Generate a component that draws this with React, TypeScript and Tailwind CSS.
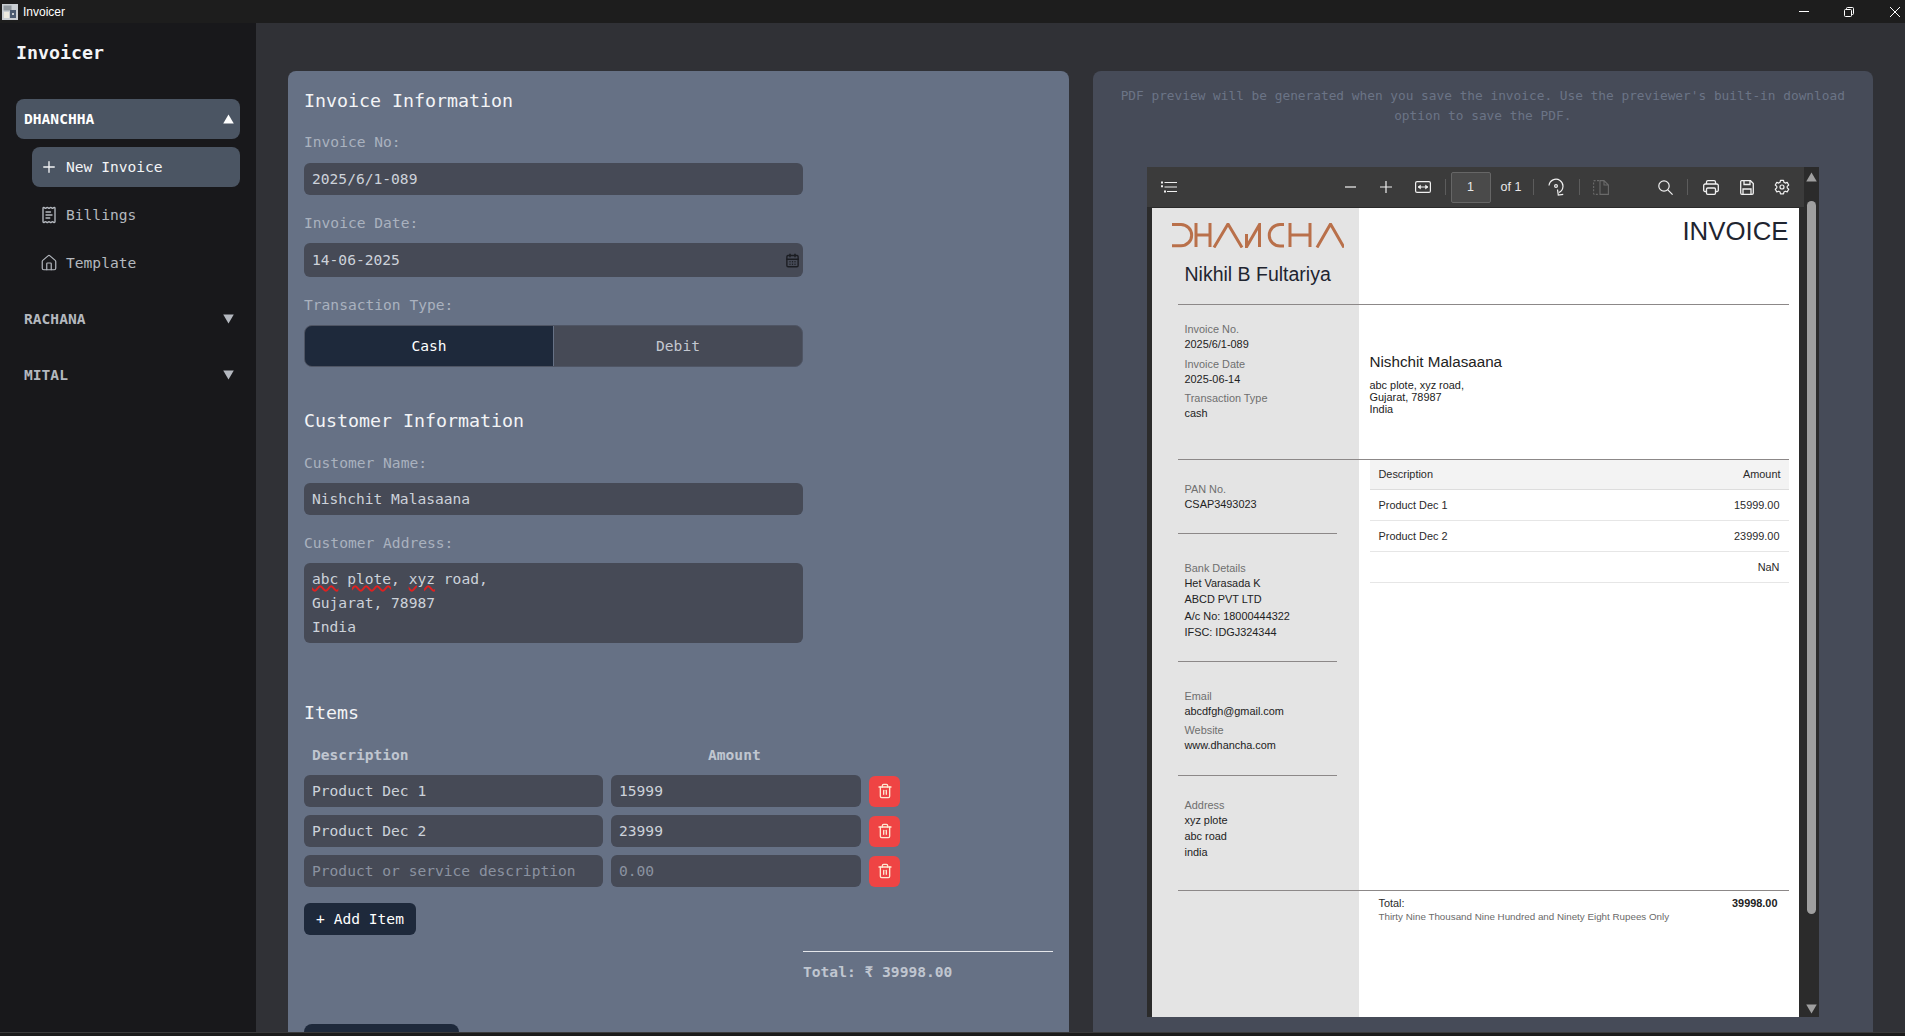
import { Plus, ReceiptText, House, Trash2, CalendarDays } from "lucide-react";
import type { ReactNode } from "react";

const squiggle = "underline decoration-[#e02020] decoration-wavy decoration-2 underline-offset-[1px]";

function Triangle({ up, className }: { up?: boolean; className: string }) {
    return (
        <svg width="11" height="10" viewBox="0 0 10 9" className={className} fill="currentColor">
            <path d={up ? "M5 0.5 L9.8 8.5 H0.2 Z" : "M0.2 0.5 H9.8 L5 8.5 Z"} />
        </svg>
    );
}

function Label({ children, className = "" }: { children: ReactNode; className?: string }) {
    return <div className={`h-5 leading-5 text-[14.6px] text-[#aab2bf] ${className}`}>{children}</div>;
}

function Heading({ children, className = "" }: { children: ReactNode; className?: string }) {
    return <h2 className={`h-7 pt-px leading-7 text-[18.3px] font-medium text-[#f3f4f6] ${className}`}>{children}</h2>;
}

function Field({ value, className = "", placeholder }: { value?: string; className?: string; placeholder?: string }) {
    return (
        <input
            readOnly
            value={value ?? ""}
            placeholder={placeholder}
            className={`block h-8 rounded-md bg-[#464a56] px-2 pb-[2px] text-[14.6px] text-[#cdd2da] placeholder:text-[#8b92a0] outline-none ${className}`}
        />
    );
}

function ItemRow({ desc, amount }: { desc?: string; amount?: string }) {
    return (
        <div className="flex items-center gap-2">
            <Field value={desc} placeholder="Product or service description" className="w-[299px]" />
            <Field value={amount} placeholder="0.00" className="w-[250px]" />
            <button className="flex h-[31px] w-[31px] items-center justify-center rounded-md bg-[#ef4444] text-[#fde8d0]">
                <Trash2 size={16} strokeWidth={2} />
            </button>
        </div>
    );
}

function Sep({ className }: { className: string }) {
    return <span className={`h-[16px] w-px shrink-0 bg-[#5c5c5c] ${className}`} />;
}

function ViewerToolbar() {
    return (
        <div className="flex h-10 shrink-0 items-center bg-[#3b3b3b] pl-[14px] text-[#f0f0f0] shadow-[0_1px_0_#2a2a2a]">
            {/* outline */}
            <svg width="16" height="12" viewBox="0 0 16 12" className="shrink-0" stroke="currentColor" fill="none" strokeWidth="1.2">
                <path d="M3.5 1.5 H16 M3.5 6 H16 M6 10.5 H16" />
                <path d="M0 1.5 H2 M0 5.2 H2 M3 10.5 H5" strokeWidth="2" />
            </svg>
            {/* zoom out */}
            <svg width="11" height="2" viewBox="0 0 11 2" className="ml-[168px] shrink-0 text-[#a8a8a8]" fill="currentColor">
                <rect width="11" height="2" />
            </svg>
            {/* zoom in */}
            <svg width="12" height="12" viewBox="0 0 12 12" className="ml-[24px] shrink-0" stroke="currentColor" strokeWidth="1.2">
                <path d="M6 0 V12 M0 6 H12" />
            </svg>
            {/* page fit */}
            <svg width="16" height="12" viewBox="0 0 16 12" className="ml-[23px] shrink-0" fill="none" stroke="currentColor">
                <rect x="0.6" y="0.6" width="14.8" height="10.8" rx="1.5" strokeWidth="1.2" />
                <path d="M3 6 H13" strokeWidth="1" />
                <path d="M3 6 L5.5 4 V8 Z M13 6 L10.5 4 V8 Z" fill="currentColor" strokeWidth="0.5" />
            </svg>
            <Sep className="ml-[14px]" />
            <div className="ml-[5px] flex h-[31px] w-10 shrink-0 items-center justify-center rounded-[2px] border border-[#666] bg-[#4a4a4a] font-['Liberation_Sans',sans-serif] text-[12.5px] text-[#e8e8e8]">
                1
            </div>
            <span className="ml-[10px] shrink-0 font-['Liberation_Sans',sans-serif] text-[12.5px] text-[#e8e8e8]">of 1</span>
            <Sep className="ml-[12px]" />
            {/* rotate */}
            <svg width="17" height="18" viewBox="0 0 17 18" className="ml-[14px] shrink-0" fill="none" stroke="currentColor" strokeWidth="1.2">
                <path d="M1 7.5 A7 7 0 1 1 11 14.5" />
                <circle cx="8" cy="8" r="1.4" />
                <path d="M10 11.5 V17 H15" transform="rotate(-8 10 15)" />
            </svg>
            <Sep className="ml-[14px]" />
            {/* spread, disabled */}
            <svg width="16" height="15" viewBox="0 0 16 15" className="ml-[13px] shrink-0 text-[#6a6a6a]" fill="none" stroke="currentColor" strokeWidth="1.1">
                <path d="M6 0.6 H1.5 A1 1 0 0 0 0.6 1.5 V13.5 A1 1 0 0 0 1.5 14.4 H6" strokeDasharray="2 1.4" />
                <path d="M7 0.6 H11 L15.4 5 V14.4 H7 Z M11 0.6 V5 H15.4" />
            </svg>
            {/* search */}
            <svg width="15" height="15" viewBox="0 0 15 15" className="ml-[49px] shrink-0" fill="none" stroke="currentColor" strokeWidth="1.2">
                <circle cx="6" cy="6" r="5.2" />
                <path d="M9.8 9.8 L14.6 14.6" />
            </svg>
            <Sep className="ml-[14px]" />
            {/* print */}
            <svg width="16" height="15" viewBox="0 0 16 15" className="ml-[15px] shrink-0" fill="none" stroke="currentColor" strokeWidth="1.3">
                <path d="M3.5 4 V2 A1.4 1.4 0 0 1 4.9 0.7 H11.1 A1.4 1.4 0 0 1 12.5 2 V4" />
                <path d="M3.5 11.5 H2 A1.3 1.3 0 0 1 0.7 10.2 V5.5 A1.5 1.5 0 0 1 2.2 4 H13.8 A1.5 1.5 0 0 1 15.3 5.5 V10.2 A1.3 1.3 0 0 1 14 11.5 H12.5" />
                <rect x="3.5" y="8" width="9" height="6.3" rx="1.2" />
            </svg>
            {/* save */}
            <svg width="14" height="15" viewBox="0 0 14 15" className="ml-[21px] shrink-0" fill="none" stroke="currentColor" strokeWidth="1.3">
                <path d="M1.6 0.7 H10.5 L13.3 3.5 V13 A1.3 1.3 0 0 1 12 14.3 H2 A1.3 1.3 0 0 1 0.7 13 V1.6 A0.9 0.9 0 0 1 1.6 0.7 Z" />
                <path d="M4 0.7 V4.5 H10 V0.7 M3 14.3 V9 H11 V14.3" />
            </svg>
            {/* settings */}
            <svg width="16" height="16" viewBox="0 0 24 24" className="ml-[20px] shrink-0" fill="none" stroke="currentColor" strokeWidth="1.8" strokeLinejoin="round">
                <path d="M9.7 2 h4.6 l.6 3 2 1.1 2.9-1 2.3 4-2.3 2 v2.2 l2.3 2-2.3 4-2.9-1-2 1.1-.6 3 h-4.6 l-.6-3-2-1.1-2.9 1-2.3-4 2.3-2 v-2.2 l-2.3-2 2.3-4 2.9 1 2-1.1 z" />
                <circle cx="12" cy="12" r="3" />
            </svg>
        </div>
    );
}

function Logo() {
    return (
        <svg width="172" height="25" viewBox="0 0 172 25" className="block text-[#b9704a]" fill="none" stroke="currentColor" strokeWidth="3">
            {/* D */}
            <path d="M0 1.5 H9 A10.5 10.5 0 0 1 9 22.8 H0" />
            {/* H */}
            <path d="M24 0 V24 M38 0 V24 M24 12 H38" />
            {/* A */}
            <path d="M42 24.5 L56 1 L70 24.5" />
            {/* N */}
            <path d="M74.5 11 V24 L87.5 1.5 V24" />
            {/* C */}
            <path d="M112 1.5 H108 A10.7 10.7 0 0 0 108 23 H112" />
            {/* H */}
            <path d="M118 0 V24 M138 0 V24 M118 12 H138" />
            {/* A */}
            <path d="M145 24.5 L158.5 1 L172 24.5" />
        </svg>
    );
}

function Meta({ label, children, className = "" }: { label: string; children: ReactNode; className?: string }) {
    return (
        <div className={className}>
            <div className="h-[13px] leading-[13px] text-[#6f6f6f]">{label}</div>
            <div className="leading-4 text-[#222]">{children}</div>
        </div>
    );
}

function TableRow({ desc, amount }: { desc?: string; amount: string }) {
    return (
        <div className="flex h-[31px] items-center justify-between border-b border-[#e6e6e6] pl-[9px] pr-[9px] text-[#2a2a2a]">
            <span>{desc}</span>
            <span>{amount}</span>
        </div>
    );
}

function PdfPage() {
    return (
        <div className="h-full w-[647px] overflow-hidden bg-[linear-gradient(to_right,#e4e4e4_207px,#ffffff_207px)] font-['Liberation_Sans',Arial,sans-serif] text-[10.9px]">
            {/* header */}
            <div className="flex h-[96px]">
                <div className="w-[207px] pl-5 pt-[15px]">
                    <Logo />
                    <div className="mt-[14px] pl-[13px] text-[19.5px] leading-6 text-[#1f2530]">Nikhil B Fultariya</div>
                </div>
                <div className="flex-1 pr-[10px] pt-2 text-right text-[25.8px] leading-[30px] text-[#1f2530]">INVOICE</div>
            </div>
            <div className="ml-[26px] h-px w-[611px] bg-[#8c8888]" />

            {/* invoice meta and customer */}
            <div className="flex h-[154px]">
                <div className="w-[207px] pl-[33px] pt-[18px]">
                    <Meta label="Invoice No.">2025/6/1-089</Meta>
                    <Meta label="Invoice Date" className="mt-[6px]">2025-06-14</Meta>
                    <Meta label="Transaction Type" className="mt-[5px]">cash</Meta>
                </div>
                <div className="flex-1 pl-[11px] pt-[47px]">
                    <div className="h-5 text-[15.2px] leading-5 text-[#222]">Nishchit Malasaana</div>
                    <div className="mt-[7px] leading-3 text-[#222]">
                        abc plote, xyz road,
                        <br />
                        Gujarat, 78987
                        <br />
                        India
                    </div>
                </div>
            </div>
            <div className="ml-[26px] h-px w-[611px] bg-[#8c8888]" />

            {/* sidebar and items */}
            <div className="flex h-[430px]">
                <div className="w-[207px]">
                    <div className="ml-[26px] h-[74px] w-[159px] border-b border-[#8c8888] pl-[7px] pt-[23px]">
                        <Meta label="PAN No.">CSAP3493023</Meta>
                    </div>
                    <div className="ml-[26px] h-[128px] w-[159px] border-b border-[#8c8888] pl-[7px] pt-[28px]">
                        <Meta label="Bank Details">
                            <div className="leading-[16.3px]">Het Varasada K</div>
                            <div className="leading-[16.3px]">ABCD PVT LTD</div>
                            <div className="leading-[16.3px]">A/c No: 18000444322</div>
                            <div className="leading-[16.3px]">IFSC: IDGJ324344</div>
                        </Meta>
                    </div>
                    <div className="ml-[26px] h-[114px] w-[159px] border-b border-[#8c8888] pl-[7px] pt-[28px]">
                        <Meta label="Email">abcdfgh@gmail.com</Meta>
                        <Meta label="Website" className="mt-[5px]">www.dhancha.com</Meta>
                    </div>
                    <div className="ml-[26px] w-[159px] pl-[7px] pt-[23px]">
                        <Meta label="Address">
                            <div>xyz plote</div>
                            <div>abc road</div>
                            <div>india</div>
                        </Meta>
                    </div>
                </div>
                <div className="ml-[11px] w-[419px]">
                    <div className="flex h-[30px] items-center justify-between border-b border-[#dddddd] bg-[#f3f3f3] pl-[9px] pr-2 text-[#2a2a2a]">
                        <span>Description</span>
                        <span>Amount</span>
                    </div>
                    <TableRow desc="Product Dec 1" amount="15999.00" />
                    <TableRow desc="Product Dec 2" amount="23999.00" />
                    <TableRow amount="NaN" />
                </div>
            </div>
            <div className="ml-[26px] h-px w-[611px] bg-[#8c8888]" />

            {/* total */}
            <div className="flex justify-between pl-[227px] pr-[21px] pt-[5px]">
                <div>
                    <div className="leading-[14px] text-[#2a2a2a]">Total:</div>
                    <div className="text-[9.8px] leading-[14px] text-[#6a6a6a]">Thirty Nine Thousand Nine Hundred and Ninety Eight Rupees Only</div>
                </div>
                <div className="font-bold leading-[14px] text-[#222]">39998.00</div>
            </div>
        </div>
    );
}

export default function App() {
    return (
        <div className="flex h-screen flex-col overflow-hidden bg-[#1e1e1e] font-['DejaVu_Sans_Mono',monospace]">
            {/* Title bar */}
            <div className="flex h-[23px] shrink-0 items-center bg-[#1d1d1d] pl-[2px] text-white">
                <svg width="16" height="16" viewBox="0 0 16 16" className="shrink-0">
                    <rect width="16" height="16" fill="#c9ced3" />
                    <rect x="1.5" y="1.5" width="8" height="5" fill="#8f979e" />
                    <rect x="2" y="8" width="5" height="6" fill="#eceae0" />
                    <rect x="8" y="6" width="6" height="8" fill="#4a5a70" />
                    <rect x="10" y="9" width="2" height="2" fill="#c9ced3" />
                </svg>
                <span className="ml-[5px] font-['Liberation_Sans',sans-serif] text-[12px]">Invoicer</span>
                <div className="ml-auto flex items-center pr-[5px]">
                    <svg width="10" height="1" viewBox="0 0 10 1" fill="#fff"><rect width="10" height="1" /></svg>
                    <svg width="10" height="10" viewBox="0 0 10 10" className="ml-[35px]" fill="none" stroke="#fff">
                        <rect x="0.5" y="2.5" width="7" height="7" rx="1" />
                        <path d="M2.5 2 V1.5 A1 1 0 0 1 3.5 0.5 H8.5 A1 1 0 0 1 9.5 1.5 V6.5 A1 1 0 0 1 8.5 7.5 H8" />
                    </svg>
                    <svg width="10" height="10" viewBox="0 0 10 10" className="ml-[36px]" stroke="#fff">
                        <path d="M0 0 L10 10 M10 0 L0 10" />
                    </svg>
                </div>
            </div>

            <div className="flex min-h-0 flex-1">
                {/* Sidebar */}
                <aside className="w-64 shrink-0 bg-[#18181b] px-4 pt-4">
                    <div className="h-7 text-[18.3px] font-bold leading-7 text-[#f3f4f6]">Invoicer</div>
                    <nav className="mt-8 text-[14.6px]">
                        <div className="flex h-10 items-center justify-between rounded-lg bg-[#4b5563] pl-2 pr-[6px] font-bold text-white">
                            DHANCHHA
                            <Triangle up className="text-white" />
                        </div>
                        <div className="mt-2 ml-4 flex h-10 items-center gap-2 rounded-lg bg-[#4b5563] pl-2 text-[#f3f4f6]">
                            <Plus size={18} strokeWidth={1.8} />
                            New Invoice
                        </div>
                        <div className="mt-2 ml-4 flex h-10 items-center gap-2 pl-2 text-[#b4b8bf]">
                            <ReceiptText size={18} strokeWidth={1.8} />
                            Billings
                        </div>
                        <div className="mt-2 ml-4 flex h-10 items-center gap-2 pl-2 text-[#b4b8bf]">
                            <House size={18} strokeWidth={1.6} />
                            Template
                        </div>
                        <div className="mt-4 flex h-10 items-center justify-between pl-2 pr-[6px] font-bold text-[#b4b8bf]">
                            RACHANA
                            <Triangle className="text-[#b4b8bf]" />
                        </div>
                        <div className="mt-4 flex h-10 items-center justify-between pl-2 pr-[6px] font-bold text-[#b4b8bf]">
                            MITAL
                            <Triangle className="text-[#b4b8bf]" />
                        </div>
                    </nav>
                </aside>

                {/* Main */}
                <main className="flex min-w-0 flex-1 gap-6 overflow-hidden bg-[#303136] px-8 pt-12">
                    <section className="min-w-0 flex-1 rounded-t-lg bg-[#667185] px-4 pt-[15px]">
                        <Heading>Invoice Information</Heading>
                        <Label className="mt-[18px]">Invoice No:</Label>
                        <Field value="2025/6/1-089" className="mt-[11px] w-[499px]" />
                        <Label className="mt-[18px]">Invoice Date:</Label>
                        <div className="mt-[10px] flex h-[34px] w-[499px] items-center justify-between rounded-md bg-[#464a56] pl-2 pr-[3px] text-[14.6px] text-[#cdd2da]">
                            14-06-2025
                            <CalendarDays size={15} strokeWidth={2.2} className="text-[#1b1d22]" />
                        </div>
                        <Label className="mt-[18px]">Transaction Type:</Label>
                        <div className="mt-[10px] flex h-[42px] w-[499px] overflow-hidden rounded-lg border border-[#4f5564] bg-[#464a56] text-[14.6px]">
                            <div className="flex w-[248px] items-center justify-center bg-[#1e293b] text-white">Cash</div>
                            <div className="flex flex-1 items-center justify-center border-l border-[#667185] text-[#c4c8d0]">Debit</div>
                        </div>

                        <Heading className="mt-[39px]">Customer Information</Heading>
                        <Label className="mt-[19px]">Customer Name:</Label>
                        <Field value="Nishchit Malasaana" className="mt-[10px] w-[499px]" />
                        <Label className="mt-[18px]">Customer Address:</Label>
                        <div className="mt-[10px] h-20 w-[499px] rounded-md bg-[#464a56] px-2 pt-1 text-[14.6px] leading-6 text-[#cdd2da]">
                            <span className={squiggle}>abc</span> <span className={squiggle}>plote</span>, <span className={squiggle}>xyz</span> road,
                            <br />
                            Gujarat, 78987
                            <br />
                            India
                        </div>

                        <Heading className="mt-[55px]">Items</Heading>
                        <div className="mt-[19px] flex h-5 text-[14.6px] font-bold leading-5 text-[#c0c6d0]">
                            <span className="w-[404px] pl-2">Description</span>
                            <span>Amount</span>
                        </div>
                        <div className="mt-[10px] flex flex-col gap-2">
                            <ItemRow desc="Product Dec 1" amount="15999" />
                            <ItemRow desc="Product Dec 2" amount="23999" />
                            <ItemRow />
                        </div>
                        <button className="mt-4 block h-8 w-[112px] rounded-md bg-[#1e293b] text-[14.6px] text-white">+ Add Item</button>
                        <div className="ml-[499px] mt-4 w-[250px] border-t border-[#e5e7eb] pt-[10px]">
                            <div className="h-5 text-[14.6px] font-bold leading-5 text-[#c0c6d0]">Total: ₹ 39998.00</div>
                        </div>
                        <div className="mt-[42px] h-10 w-[155px] rounded-lg bg-[#1e293b]" />
                    </section>

                    <section className="min-w-0 flex-1 rounded-t-lg bg-[#464b58] px-4 pt-[15px]">
                        <p className="text-center text-[12.8px] leading-5 text-[#6b7486]">
                            PDF preview will be generated when you save the invoice. Use the previewer's built-in download
                            <br />
                            option to save the PDF.
                        </p>
                        <div className="ml-[38px] mt-[41px] flex h-[850px] w-[672px]">
                            <div className="flex w-[657px] flex-col">
                                <ViewerToolbar />
                                <div className="mt-px min-h-0 flex-1 bg-[#2b2b2b] pl-[5px]">
                                    <PdfPage />
                                </div>
                            </div>
                            <div className="flex w-[15px] flex-col items-center bg-[#2b2b2b] pt-[5px] text-[#9f9f9f]">
                                <Triangle up className="shrink-0" />
                                <div className="mt-[19px] h-[713px] w-[9px] rounded-full bg-[#9f9f9f]" />
                                <Triangle className="mt-auto mb-[3px] shrink-0" />
                            </div>
                        </div>
                    </section>
                </main>
            </div>

            {/* window bottom edge */}
            <div className="h-1 shrink-0 border-t border-[#3a3a3a] bg-[#1b1b1b]" />
        </div>
    );
}
